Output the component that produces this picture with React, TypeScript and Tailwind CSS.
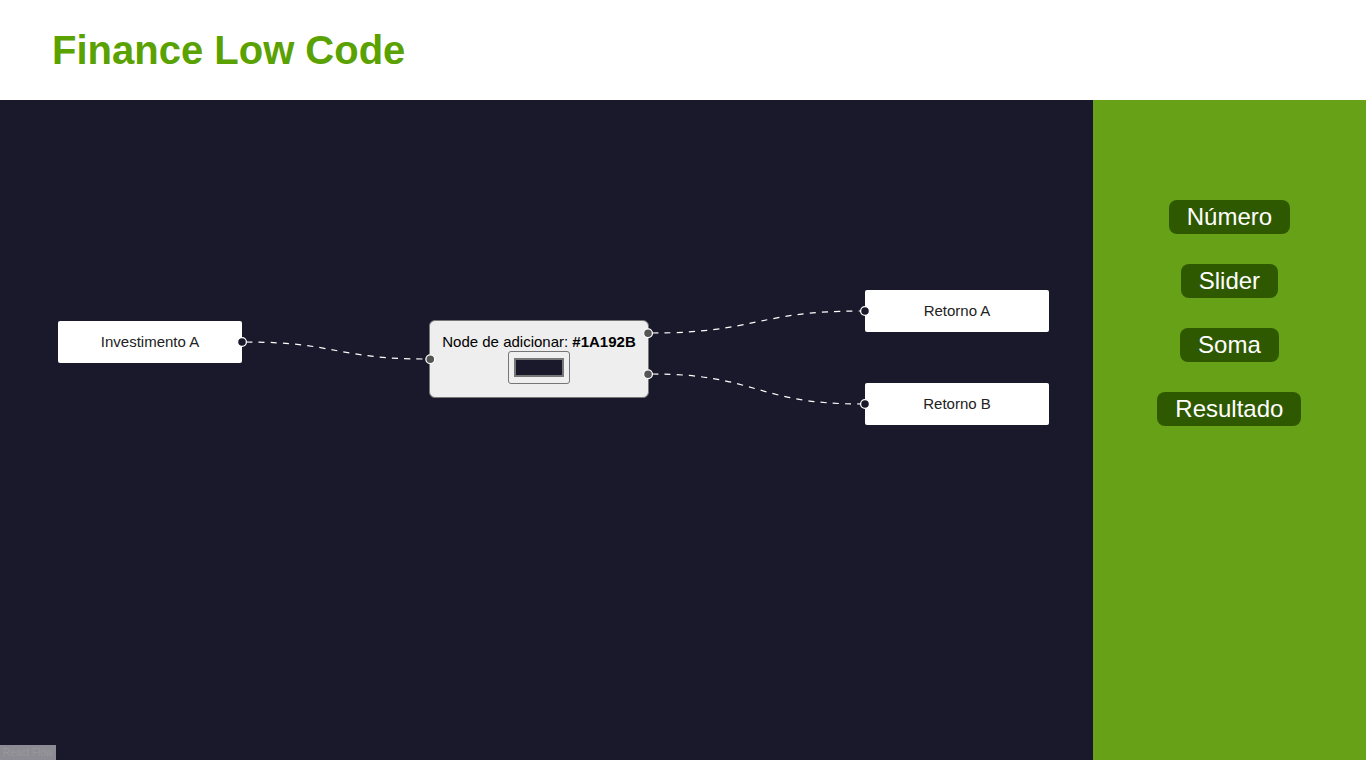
import { useState } from "react";

type Point = { x: number; y: number };

const edges: { from: Point; to: Point }[] = [
  { from: { x: 246, y: 242 }, to: { x: 426, y: 259 } },
  { from: { x: 652, y: 233 }, to: { x: 861, y: 211 } },
  { from: { x: 652, y: 274 }, to: { x: 861, y: 304 } },
];

const handles: (Point & { fill: string })[] = [
  { x: 242, y: 242, fill: "#1a192b" },
  { x: 430.3, y: 259.2, fill: "#555" },
  { x: 648, y: 233.2, fill: "#555" },
  { x: 648, y: 274.2, fill: "#555" },
  { x: 865, y: 211, fill: "#1a192b" },
  { x: 865, y: 304, fill: "#1a192b" },
];

function edgePath({ from, to }: { from: Point; to: Point }) {
  const mid = (from.x + to.x) / 2;
  return `M${from.x},${from.y} C${mid},${from.y} ${mid},${to.y} ${to.x},${to.y}`;
}

function ColorNode() {
  const [color, setColor] = useState("#1a192b");
  return (
    <div className="absolute left-[429px] top-[220px] flex h-[78px] w-[220px] flex-col items-center rounded-md border border-[#777] bg-[#eee] pt-3 text-black">
      <label htmlFor="node-color" className="whitespace-nowrap text-[15px] leading-[18px]">
        Node de adicionar: <strong>{color.toUpperCase()}</strong>
      </label>
      <input
        id="node-color"
        type="color"
        value={color}
        onChange={(e) => setColor(e.target.value)}
        className="h-[33px] w-[62px] appearance-none rounded-[3px] border border-[#767676] bg-[#efefef] px-[5px] py-[6px] [&::-webkit-color-swatch-wrapper]:p-0 [&::-webkit-color-swatch]:rounded-none [&::-webkit-color-swatch]:border-2 [&::-webkit-color-swatch]:border-[#777]"
      />
    </div>
  );
}

const nodeClass =
  "absolute flex h-[42px] w-[184px] items-center justify-center rounded-[2px] bg-white text-[15px] leading-[18px] text-[#222]";

export default function App() {
  return (
    <div className="flex min-h-screen flex-col bg-white pb-2 font-['Liberation_Sans',Arial,sans-serif]">
      <header className="flex h-[100px] items-center px-[52px]">
        <h1 className="text-[40px] font-bold leading-[46px] text-[#5aa102]">Finance Low Code</h1>
      </header>
      <main className="flex grow">
        <section className="relative w-4/5 overflow-hidden bg-[#1a192b]">
          <svg className="absolute inset-0 size-full" fill="none" stroke="#fff" strokeWidth="1.23" strokeDasharray="6.13 6.13">
            {edges.map((edge) => (
              <path key={edgePath(edge)} d={edgePath(edge)} />
            ))}
          </svg>
          <div className={`${nodeClass} left-[58px] top-[221px]`}>Investimento A</div>
          <ColorNode />
          <div className={`${nodeClass} left-[865px] top-[190px]`}>Retorno A</div>
          <div className={`${nodeClass} left-[865px] top-[283px]`}>Retorno B</div>
          <svg className="pointer-events-none absolute inset-0 size-full" stroke="#fff" strokeWidth="1.3">
            {handles.map(({ x, y, fill }) => (
              <circle key={`${x}-${y}`} cx={x} cy={y} r="4.4" fill={fill} />
            ))}
          </svg>
          <a
            href="https://reactflow.dev"
            className="absolute bottom-0 left-0 bg-white/50 px-[3px] py-[2px] text-[10px] leading-[11px] text-[#999]"
          >
            React Flow
          </a>
        </section>
        <aside className="flex w-1/5 flex-col items-center gap-[30px] bg-[#66a118] pt-[100px]">
          {["Número", "Slider", "Soma", "Resultado"].map((name) => (
            <button
              key={name}
              type="button"
              className="h-[34px] rounded-lg bg-[#2e5900] px-[18px] text-2xl leading-[34px] text-white"
            >
              {name}
            </button>
          ))}
        </aside>
      </main>
    </div>
  );
}
